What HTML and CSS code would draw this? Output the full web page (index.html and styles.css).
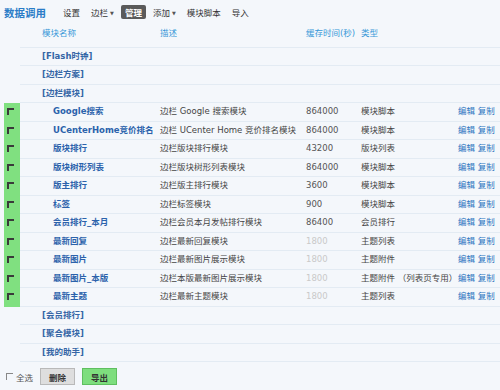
FILE: index.html
```html
<!DOCTYPE html>
<html lang="zh-CN">
<head>
    <meta charset="UTF-8">
    <title>数据调用</title>
    <link rel="stylesheet" href="styles.css">
</head>
<body>
    <div class="nav">
        <span class="title">数据调用</span>
        <a class="item">设置</a>
        <a class="item">边栏<span class="caret">▼</span></a>
        <a class="item active">管理</a>
        <a class="item">添加<span class="caret">▼</span></a>
        <a class="item">模块脚本</a>
        <a class="item">导入</a>
    </div>

    <table class="list">
        <colgroup>
            <col class="c-chk">
            <col class="c-name">
            <col class="c-desc">
            <col class="c-cache">
            <col class="c-type">
            <col>
        </colgroup>
        <tr class="head">
            <td class="chk"></td>
            <td class="name">模块名称</td>
            <td>描述</td>
            <td>缓存时间(秒)</td>
            <td>类型</td>
            <td></td>
        </tr>
        <tr class="group"><td class="chk"></td><td class="name">[Flash时钟]</td><td></td><td></td><td></td><td></td></tr>
        <tr class="group"><td class="chk"></td><td class="name">[边栏方案]</td><td></td><td></td><td></td><td></td></tr>
        <tr class="group"><td class="chk"></td><td class="name">[边栏模块]</td><td></td><td></td><td></td><td></td></tr>
        <tr class="mod">
            <td class="chk on"><span class="box"></span></td>
            <td class="name">Google搜索</td>
            <td>边栏 Google 搜索模块</td>
            <td class="cache">864000</td>
            <td>模块脚本</td>
            <td class="ops"><a>编辑</a> <a>复制</a></td>
        </tr>
        <tr class="mod">
            <td class="chk on"><span class="box"></span></td>
            <td class="name">UCenterHome竞价排名</td>
            <td>边栏 UCenter Home 竞价排名模块</td>
            <td class="cache">864000</td>
            <td>模块脚本</td>
            <td class="ops"><a>编辑</a> <a>复制</a></td>
        </tr>
        <tr class="mod">
            <td class="chk on"><span class="box"></span></td>
            <td class="name">版块排行</td>
            <td>边栏版块排行模块</td>
            <td class="cache">43200</td>
            <td>版块列表</td>
            <td class="ops"><a>编辑</a> <a>复制</a></td>
        </tr>
        <tr class="mod">
            <td class="chk on"><span class="box"></span></td>
            <td class="name">版块树形列表</td>
            <td>边栏版块树形列表模块</td>
            <td class="cache">864000</td>
            <td>模块脚本</td>
            <td class="ops"><a>编辑</a> <a>复制</a></td>
        </tr>
        <tr class="mod">
            <td class="chk on"><span class="box"></span></td>
            <td class="name">版主排行</td>
            <td>边栏版主排行模块</td>
            <td class="cache">3600</td>
            <td>模块脚本</td>
            <td class="ops"><a>编辑</a> <a>复制</a></td>
        </tr>
        <tr class="mod">
            <td class="chk on"><span class="box"></span></td>
            <td class="name">标签</td>
            <td>边栏标签模块</td>
            <td class="cache">900</td>
            <td>模块脚本</td>
            <td class="ops"><a>编辑</a> <a>复制</a></td>
        </tr>
        <tr class="mod">
            <td class="chk on"><span class="box"></span></td>
            <td class="name">会员排行_本月</td>
            <td>边栏会员本月发帖排行模块</td>
            <td class="cache">86400</td>
            <td>会员排行</td>
            <td class="ops"><a>编辑</a> <a>复制</a></td>
        </tr>
        <tr class="mod">
            <td class="chk on"><span class="box"></span></td>
            <td class="name">最新回复</td>
            <td>边栏最新回复模块</td>
            <td class="cache off">1800</td>
            <td>主题列表</td>
            <td class="ops"><a>编辑</a> <a>复制</a></td>
        </tr>
        <tr class="mod">
            <td class="chk on"><span class="box"></span></td>
            <td class="name">最新图片</td>
            <td>边栏最新图片展示模块</td>
            <td class="cache off">1800</td>
            <td>主题附件</td>
            <td class="ops"><a>编辑</a> <a>复制</a></td>
        </tr>
        <tr class="mod">
            <td class="chk on"><span class="box"></span></td>
            <td class="name">最新图片_本版</td>
            <td>边栏本版最新图片展示模块</td>
            <td class="cache off">1800</td>
            <td>主题附件 （列表页专用）</td>
            <td class="ops"><a>编辑</a> <a>复制</a></td>
        </tr>
        <tr class="mod">
            <td class="chk on"><span class="box"></span></td>
            <td class="name">最新主题</td>
            <td>边栏最新主题模块</td>
            <td class="cache off">1800</td>
            <td>主题列表</td>
            <td class="ops"><a>编辑</a> <a>复制</a></td>
        </tr>
        <tr class="group"><td class="chk"></td><td class="name">[会员排行]</td><td></td><td></td><td></td><td></td></tr>
        <tr class="group"><td class="chk"></td><td class="name">[聚合模块]</td><td></td><td></td><td></td><td></td></tr>
        <tr class="group"><td class="chk"></td><td class="name">[我的助手]</td><td></td><td></td><td></td><td></td></tr>
    </table>

    <div class="footer">
        <label class="all"><span class="box"></span>全选</label>
        <button class="btn">删除</button>
        <button class="btn green">导出</button>
    </div>
</body>
</html>
```

FILE: styles.css
```css
body {
    margin: 0;
    padding: 0 0 0 4px;
    background: #f4f7fb;
    font-family: "DejaVu Sans", "Noto Sans CJK SC", sans-serif;
    font-size: 8.5px;
    color: #444;
}
.nav {
    display: flex;
    align-items: center;
    gap: 3px;
    height: 24px;
}
.title {
    font-family: "Noto Sans CJK SC", sans-serif;
    font-size: 10.5px;
    font-weight: bold;
    color: #2a7cc7;
    margin-right: 10px;
}
.item {
    padding: 1px 4px;
    color: #333;
}
.caret {
    font-size: 5px;
    margin-left: 2px;
    vertical-align: 1px;
    color: #555;
}
.item.active {
    background: #5a5a5a;
    color: #fff;
    font-weight: bold;
    border-radius: 2px;
}
.list {
    width: 100%;
    table-layout: fixed;
    border-collapse: separate;
    border-spacing: 0;
}
.c-chk { width: 16px; }
.c-name { width: 140px; }
.c-desc { width: 146px; }
.c-cache { width: 55px; }
.c-type { width: 97px; }
.list td {
    padding: 0;
    line-height: 17.5px;
    border-bottom: 1px solid #e3ebf3;
    white-space: nowrap;
}
.list td.chk {
    border-bottom: none;
}
.list td.chk.on {
    background: #80e080;
    border-bottom: 1px solid #80e080;
}
.head td {
    line-height: 18.75px;
    padding-bottom: 4px;
    color: #3797d8;
}
.head .name,
.group .name {
    padding-left: 22px;
}
.group .name {
    font-weight: bold;
    color: #3566a6;
}
.mod .name {
    padding-left: 33px;
    font-weight: bold;
    color: #2b62ab;
}
.mod .cache {
    color: #555;
}
.mod .cache.off {
    color: #c9c9c9;
}
.ops a {
    color: #2b74c0;
}
.box {
    display: inline-block;
    width: 5px;
    height: 5px;
    border-top: 2px solid #3a3a3a;
    border-left: 2px solid #3a3a3a;
    margin-left: 3px;
    vertical-align: middle;
}
.footer {
    display: flex;
    align-items: center;
    gap: 7px;
    margin-top: 6px;
}
.all {
    display: flex;
    align-items: center;
    gap: 3px;
    color: #555;
}
.all .box {
    border-color: #888;
    border-top-width: 1px;
    border-left-width: 1px;
    width: 6px;
    height: 6px;
    margin-left: 2px;
}
.btn {
    font-family: inherit;
    font-size: 8.5px;
    font-weight: bold;
    color: #333;
    width: 35px;
    height: 17px;
    padding: 0;
    border: 1px solid #b9b9b9;
    background: #dedede;
}
.btn.green {
    background: #7ede7e;
    border-color: #5fbf5f;
}
```
